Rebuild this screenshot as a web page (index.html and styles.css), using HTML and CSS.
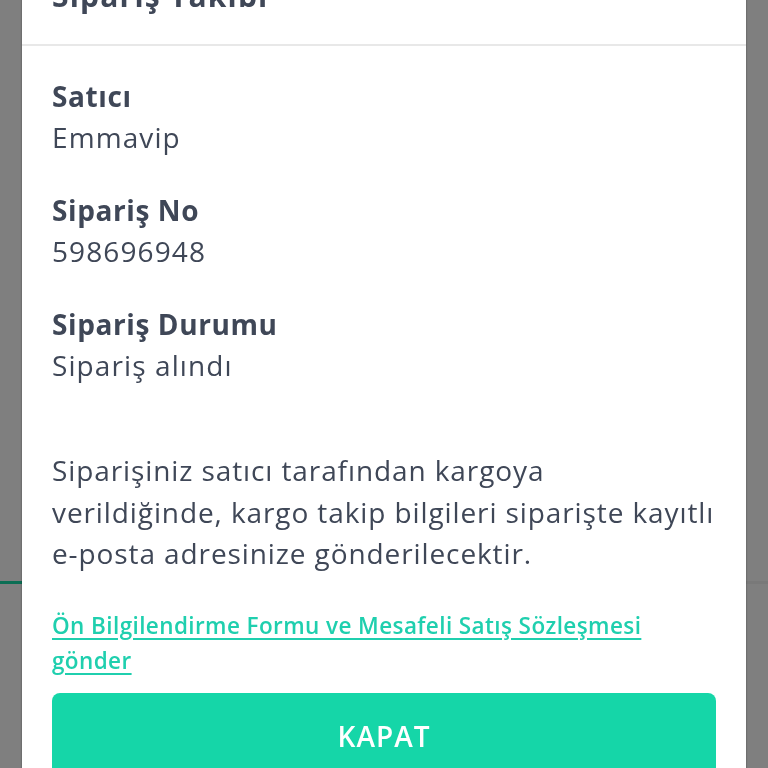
FILE: index.html
```html
<!DOCTYPE html>
<html lang="tr">
<head>
    <meta charset="UTF-8">
    <meta name="viewport" content="width=device-width, initial-scale=1.0">
    <title>Sipariş Takibi</title>
    <link rel="stylesheet" href="styles.css">
</head>
<body>
    <div class="page">
        <div class="page-top"></div>
        <div class="page-tabs">
            <span class="tab active"></span>
            <span class="tab"></span>
        </div>
    </div>

    <div class="overlay"></div>

    <div class="modal">
        <header class="modal-header">
            <h1>Sipariş Takibi</h1>
        </header>

        <main class="modal-body">
            <div class="info">
                <h2>Satıcı</h2>
                <p>Emmavip</p>
            </div>
            <div class="info">
                <h2>Sipariş No</h2>
                <p>598696948</p>
            </div>
            <div class="info">
                <h2>Sipariş Durumu</h2>
                <p>Sipariş alındı</p>
            </div>

            <p class="note">Siparişiniz satıcı tarafından kargoya<br>verildiğinde, kargo takip bilgileri siparişte kayıtlı<br>e-posta adresinize gönderilecektir.</p>

            <a class="send-link" href="#">Ön Bilgilendirme Formu ve Mesafeli Satış Sözleşmesi gönder</a>

            <button class="close-btn">KAPAT</button>
        </main>
    </div>
</body>
</html>
```

FILE: styles.css
```css
:root {
    --text-color: #3f4757;
    --accent: #15d6a8;
    --link: #1fcfae;
    --divider: #e8e8e8;
}

* {
    box-sizing: border-box;
    margin: 0;
    padding: 0;
}

body {
    font-family: 'Open Sans', 'Liberation Sans', sans-serif;
    background-color: #ffffff;
    color: var(--text-color);
    height: 768px;
    overflow: hidden;
}

/* page behind the modal */
.page-top {
    height: 581px;
}

.page-tabs {
    display: flex;
    height: 3px;
}

.tab {
    flex: 1;
    background-color: #f2f2f2;
}

.tab.active {
    background-color: #17dca8;
}

.overlay {
    position: fixed;
    inset: 0;
    background-color: rgba(0, 0, 0, 0.5);
}

.modal {
    position: fixed;
    top: -34px;
    left: 22px;
    right: 22px;
    bottom: -40px;
    background-color: #ffffff;
    box-shadow: 0 0 2px rgba(0, 0, 0, 0.4);
}

.modal-header {
    height: 80px;
    padding: 0 30px;
    border-bottom: 2px solid var(--divider);
}

.modal-header h1 {
    font-size: 30px;
    font-weight: 700;
    letter-spacing: 1.2px;
    line-height: 60px;
}

.modal-body {
    padding: 30px 30px 0;
    display: flex;
    flex-direction: column;
}

.info {
    margin-bottom: 32px;
}

.info h2,
.info p {
    font-size: 28px;
    line-height: 41px;
}

.info h2 {
    font-weight: 700;
    letter-spacing: 0.6px;
}

.info p {
    letter-spacing: 1.1px;
}

.note {
    margin-top: 32px;
    font-size: 28px;
    letter-spacing: 0.9px;
    line-height: 41.5px;
    white-space: nowrap;
}

.send-link {
    margin-top: 33px;
    font-size: 22.5px;
    font-weight: 600;
    letter-spacing: 0.4px;
    line-height: 35px;
    color: var(--link);
    text-decoration: underline;
    text-underline-offset: 4px;
}

.close-btn {
    margin-top: 15px;
    height: 86px;
    border: none;
    border-radius: 8px;
    background-color: var(--accent);
    color: #ffffff;
    font-family: inherit;
    font-size: 28px;
    font-weight: 600;
    letter-spacing: 1px;
}
```
